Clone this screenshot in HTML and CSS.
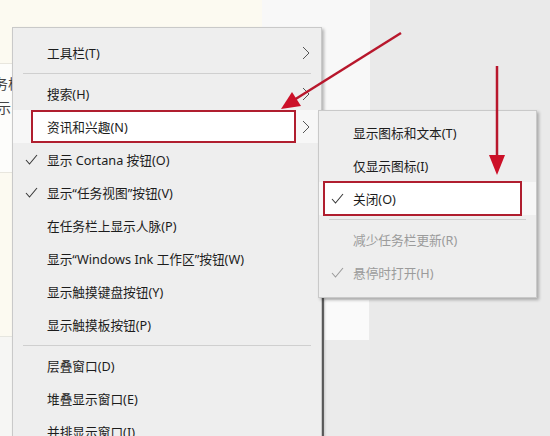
FILE: index.html
```html
<!DOCTYPE html>
<html lang="zh-CN">
<head>
  <meta charset="UTF-8">
  <title>任务栏右键菜单</title>
  <link rel="stylesheet" href="styles.css">
</head>
<body>
  <div class="desk">
    <div class="col col-left">
      <div class="band cream"></div>
      <div class="band white">
        <span class="peek peek-a">务栏</span>
        <span class="peek peek-b">示</span>
      </div>
      <div class="band cream tall"></div>
      <div class="band pale"></div>
    </div>
    <div class="col col-mid">
      <div class="mid-top"></div>
      <div class="mid-bottom"><div class="square"></div></div>
    </div>
    <div class="col col-right"></div>
  </div>

  <!-- taskbar context menu -->
  <ul class="menu main">
    <li class="item"><span class="tick"></span><span class="label">工具栏(T)</span><svg class="chev" viewBox="0 0 8 14"><polyline points="1,1 7,7 1,13"/></svg></li>
    <li class="sep"></li>
    <li class="item"><span class="tick"></span><span class="label">搜索(H)</span><svg class="chev" viewBox="0 0 8 14"><polyline points="1,1 7,7 1,13"/></svg></li>
    <li class="item open"><span class="mark main-mark"></span><span class="tick"></span><span class="label">资讯和兴趣(N)</span><svg class="chev" viewBox="0 0 8 14"><polyline points="1,1 7,7 1,13"/></svg></li>
    <li class="item"><span class="tick"><svg viewBox="0 0 13 11"><polyline points="1,6 4.5,10 12,1"/></svg></span><span class="label">显示 Cortana 按钮(O)</span></li>
    <li class="item"><span class="tick"><svg viewBox="0 0 13 11"><polyline points="1,6 4.5,10 12,1"/></svg></span><span class="label">显示“任务视图”按钮(V)</span></li>
    <li class="item"><span class="tick"></span><span class="label">在任务栏上显示人脉(P)</span></li>
    <li class="item"><span class="tick"></span><span class="label">显示“Windows Ink 工作区”按钮(W)</span></li>
    <li class="item"><span class="tick"></span><span class="label">显示触摸键盘按钮(Y)</span></li>
    <li class="item"><span class="tick"></span><span class="label">显示触摸板按钮(P)</span></li>
    <li class="sep"></li>
    <li class="item"><span class="tick"></span><span class="label">层叠窗口(D)</span></li>
    <li class="item"><span class="tick"></span><span class="label">堆叠显示窗口(E)</span></li>
    <li class="item"><span class="tick"></span><span class="label">并排显示窗口(I)</span></li>
  </ul>

  <!-- news and interests submenu -->
  <ul class="menu sub">
    <li class="item"><span class="tick"></span><span class="label">显示图标和文本(T)</span></li>
    <li class="item"><span class="tick"></span><span class="label">仅显示图标(I)</span></li>
    <li class="item open"><span class="mark sub-mark"></span><span class="tick"><svg viewBox="0 0 13 11"><polyline points="1,6 4.5,10 12,1"/></svg></span><span class="label">关闭(O)</span></li>
    <li class="sep"></li>
    <li class="item off"><span class="tick"></span><span class="label">减少任务栏更新(R)</span></li>
    <li class="item off"><span class="tick"><svg viewBox="0 0 13 11"><polyline points="1,6 4.5,10 12,1"/></svg></span><span class="label">悬停时打开(H)</span></li>
  </ul>

  <!-- red annotation arrows -->
  <svg class="arrows" viewBox="0 0 550 436">
    <line x1="401" y1="33" x2="294" y2="100"/>
    <polygon points="281,109 301,106 292,92"/>
    <line x1="497" y1="66" x2="497" y2="157"/>
    <polygon points="489,155 505,155 497,175"/>
  </svg>
</body>
</html>
```

FILE: styles.css
```css
/* Page */
body {
  margin: 0;
  width: 550px;
  height: 436px;
  overflow: hidden;
  position: relative;
  font-family: "Noto Sans", "Noto Sans CJK SC", sans-serif;
  font-size: 12.7px;
  color: #1c1c1c;
}

/* Background windows */
.desk {
  display: grid;
  grid-template-columns: 262px 108px 1fr;
  height: 436px;
}

.col-left {
  display: flex;
  flex-direction: column;
  background: #fcfaf1;
}

.band.cream {
  height: 63px;
}

.band.white {
  height: 110px;
  background: #fdfdfb;
  border-top: 1px solid #e8e6de;
  border-bottom: 1px solid #e8e6de;
  display: flex;
  flex-direction: column;
  font-size: 14px;
  color: #444;
  padding-top: 9px;
  box-sizing: border-box;
}

.peek-a {
  margin-left: -6px;
}

.peek-b {
  margin-left: -3px;
  margin-top: 4px;
}

.band.tall {
  height: 163px;
}

.band.pale {
  flex: 1;
  background: #f6f6f4;
  border-top: 1px solid #e6e6e0;
}

.col-mid {
  display: flex;
  flex-direction: column;
}

.mid-top {
  height: 298px;
  background: #f8f8f8;
}

.mid-bottom {
  flex: 1;
  margin-left: 60px;
  background: #ebebeb;
  border-left: 2px solid #737373;
  padding: 2px 0 0 1px;
}

.square {
  width: 44px;
  height: 40px;
  background: #fafafa;
}

.col-right {
  background: #eaeaea;
}

/* Menus */
.menu {
  position: absolute;
  margin: 0;
  list-style: none;
  background: #eeeeee;
  border: 1px solid #c9c9c9;
  box-shadow: 2px 2px 3px rgba(0, 0, 0, 0.28);
  box-sizing: border-box;
}

.menu.main {
  left: 12px;
  top: 27px;
  width: 310px;
  height: 430px;
  padding: 8px 0 0;
}

.menu.sub {
  left: 318px;
  top: 110px;
  width: 219px;
  height: 188px;
  padding: 5px 0 0;
  z-index: 2;
}

.item {
  position: relative;
  display: flex;
  align-items: center;
  height: 33px;
  padding-right: 11px;
}

.item.open {
  background: #f7f7f7;
}

.item.off {
  color: #9b9b9b;
}

.tick {
  position: relative;
  width: 34px;
  flex: none;
  display: flex;
  align-items: center;
}

.tick svg {
  width: 13px;
  height: 11px;
  margin-left: 12px;
  fill: none;
  stroke: #3a3a3a;
  stroke-width: 1.1;
}

.item.off .tick svg {
  stroke: #9b9b9b;
}

.label {
  position: relative;
  white-space: nowrap;
}

.chev {
  margin-left: auto;
  width: 8px;
  height: 14px;
  fill: none;
  stroke: #555;
  stroke-width: 1;
}

.sep {
  height: 8px;
  display: flex;
  align-items: center;
}

.sep::after {
  content: "";
  flex: 1;
  margin: 0 10px;
  border-top: 1px solid #cfcfcf;
}

/* Red annotation boxes */
.mark {
  position: absolute;
  background: #fff;
  border: 2px solid #b01e2f;
  box-sizing: border-box;
}

.main-mark {
  left: 18px;
  right: 25px;
  top: 0;
  bottom: 0;
}

.sub-mark {
  left: 4px;
  right: 14px;
  top: -1px;
  bottom: -1px;
}

.arrows {
  position: absolute;
  left: 0;
  top: 0;
  width: 550px;
  height: 436px;
  z-index: 5;
  pointer-events: none;
}

.arrows line {
  stroke: #b8172c;
  stroke-width: 2.5;
}

.arrows polygon {
  fill: #cc1028;
}
```
